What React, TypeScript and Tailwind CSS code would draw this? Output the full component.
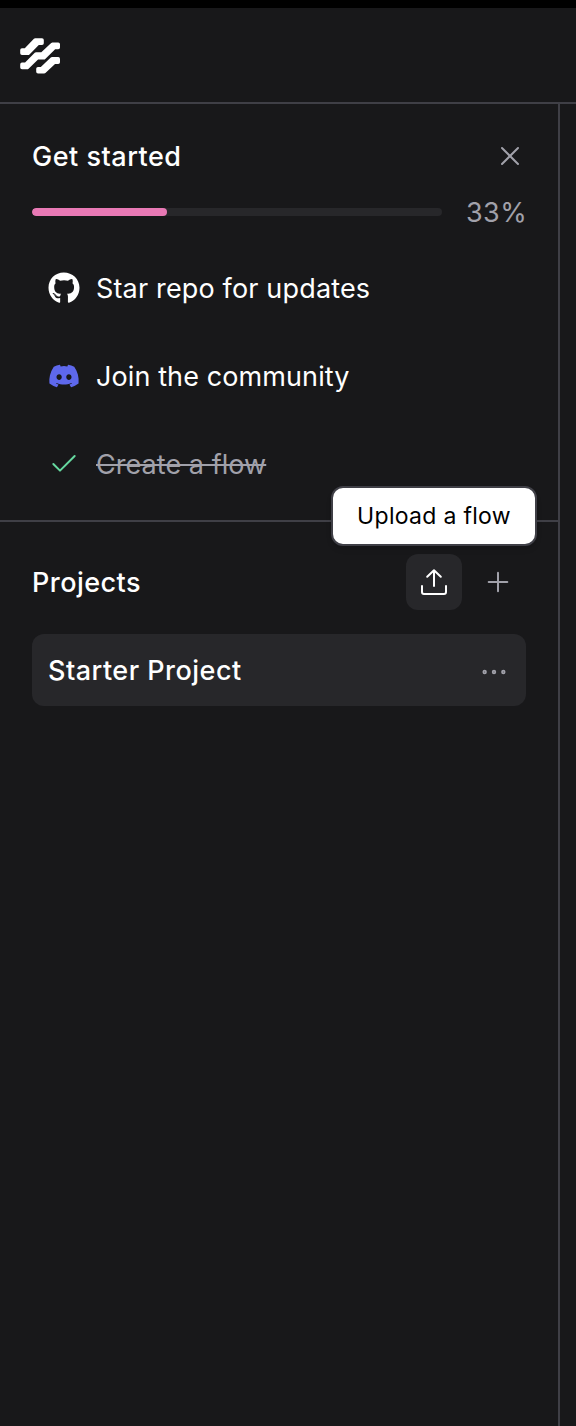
import React from "react";
import { Check, Ellipsis, Plus, X } from "lucide-react";
import { FaDiscord, FaGithub } from "react-icons/fa";

function Logo() {
  return (
    <svg
      className="mt-0.5 ml-5 h-9 w-10"
      viewBox="20 38 40 36"
      overflow="visible"
      fill="white"
      stroke="white"
      strokeWidth="3.6"
      strokeLinejoin="round"
    >
      <path d="M22 50H25.6L35.2 40H42V43.3H38L28.2 53.2H22Z" />
      <path d="M22 64.4H25.6L36 54H42L52.4 44.2H58.2V47.5H54.4L44 57.7H37.3L27.3 67.5H22Z" />
      <path d="M38 68.7H41.5L52 58.9H58.2V62.2H54.3L44.2 71.8H38Z" />
    </svg>
  );
}

function UploadIcon() {
  return (
    <svg
      className="size-7"
      viewBox="0 0 28 28"
      fill="none"
      stroke="white"
      strokeWidth="2"
      strokeLinecap="round"
      strokeLinejoin="round"
    >
      <path d="M14 18V2.2M7.2 8.8L14 2.2L20.8 8.8M2 18V24C2 25.4 2.6 26 4 26H24C25.4 26 26 25.4 26 24V18" />
    </svg>
  );
}

export default function App() {
  return (
    <div className="flex h-[1426px] w-[576px] flex-col overflow-hidden border-t-8 border-black bg-[#18181a] font-['Inter',sans-serif] text-[27px] leading-10 tracking-[0.13px] text-white">
      <header className="flex h-24 shrink-0 items-center border-b-2 border-[#3f3f46]">
        <Logo />
      </header>
      <aside className="flex w-[560px] flex-1 flex-col border-r-2 border-[#3f3f46]">
        <section className="h-[418px] shrink-0 border-b-2 border-[#3f3f46] px-8 pt-8">
          <div className="flex h-10 items-center justify-between">
            <h2 className="pt-0.5 font-[450] tracking-[0.5px]">Get started</h2>
            <X className="size-8 text-[#a1a1aa]" strokeWidth={1.5} />
          </div>
          <div className="mt-4 flex h-10 items-center">
            <div className="h-2 w-[410px] shrink-0 overflow-hidden rounded-full bg-[#27272a]">
              <div className="h-2 w-[135px] rounded-full bg-[#e879b5]" />
            </div>
            <span className="ml-6 pt-0.5 tracking-[0.4px] text-[#a1a1aa]">33%</span>
          </div>
          <ul className="mt-5 flex flex-col gap-4 pl-4">
            <li className="flex h-[72px] items-center gap-4">
              <FaGithub className="size-8" />
              <span className="pt-0.5 tracking-[0.16px]">Star repo for updates</span>
            </li>
            <li className="flex h-[72px] items-center gap-4">
              <FaDiscord className="size-8 text-[#5e68ec]" />
              <span className="pt-0.5 tracking-[0.1px]">Join the community</span>
            </li>
            <li className="flex h-[72px] items-center gap-4 text-[#a1a1aa]">
              <Check className="size-8 text-[#66d9a0]" strokeWidth={1.5} />
              <span className="pt-0.5 tracking-[0.05px] line-through decoration-2">Create a flow</span>
            </li>
          </ul>
        </section>
        <section className="px-8 pt-8">
          <div className="flex h-14 items-center">
            <h2 className="flex-1 pt-0.5 font-[450] tracking-[0.45px]">Projects</h2>
            <div className="relative flex size-14 items-center justify-center rounded-xl bg-[#27272a]">
              <UploadIcon />
              <div className="absolute bottom-16 left-[-75px] flex h-[60px] w-[206px] items-center justify-center rounded-xl border-2 border-[#3f3f46] bg-white text-[23px] tracking-[0.3px] whitespace-nowrap text-black shadow-md">
                Upload a flow
              </div>
            </div>
            <div className="ml-2 flex size-14 items-center justify-center text-[#a1a1aa]">
              <Plus className="size-8" strokeWidth={1.5} />
            </div>
          </div>
          <div className="mt-6 flex h-[72px] items-center justify-between rounded-xl bg-[#27272a] pr-4 pl-4">
            <span className="pt-0.5 font-[450] tracking-[0.48px]">Starter Project</span>
            <Ellipsis className="mt-1 size-8 text-[#a1a1aa]" strokeWidth={1.3} />
          </div>
        </section>
      </aside>
    </div>
  );
}
